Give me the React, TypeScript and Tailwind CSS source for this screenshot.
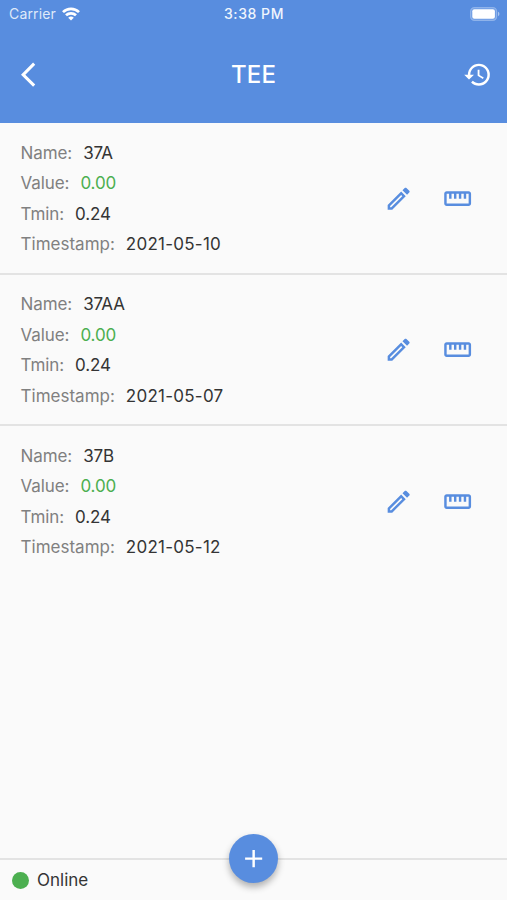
import React from 'react';

type Reading = { name: string; value: string; tmin: string; timestamp: string };

const readings: Reading[] = [
  { name: '37A', value: '0.00', tmin: '0.24', timestamp: '2021-05-10' },
  { name: '37AA', value: '0.00', tmin: '0.24', timestamp: '2021-05-07' },
  { name: '37B', value: '0.00', tmin: '0.24', timestamp: '2021-05-12' },
];

function Icon({ d, className = '' }: { d: string; className?: string }) {
  return (
    <svg viewBox="0 0 24 24" fill="currentColor" className={`block size-[29.3px] shrink-0 ${className}`}>
      <path d={d} />
    </svg>
  );
}

const backPath = 'M11.67 3.87 9.9 2.1 0 12l9.9 9.9 1.77-1.77L3.54 12z';
const historyPath =
  'M13 3a9 9 0 0 0-9 9H1l3.89 3.89.07.14L9 12H6c0-3.87 3.13-7 7-7s7 3.13 7 7-3.13 7-7 7c-1.93 0-3.68-.79-4.94-2.06l-1.42 1.42A8.954 8.954 0 0 0 13 21a9 9 0 0 0 0-18zm-1 5v5l4.28 2.54.72-1.21-3.5-2.08V8z';
const editPath =
  'm14.06 9.02.92.92L5.92 19H5v-.92zM17.66 3c-.25 0-.51.1-.7.29l-1.83 1.83 3.75 3.75 1.83-1.83a.996.996 0 0 0 0-1.41l-2.34-2.34c-.2-.2-.45-.29-.71-.29m-3.6 3.19L3 17.25V21h3.75L17.81 9.94z';
const rulerPath =
  'M21 6H3c-1.1 0-2 .9-2 2v8c0 1.1.9 2 2 2h18c1.1 0 2-.9 2-2V8c0-1.1-.9-2-2-2m0 10H3V8h2v4h2V8h2v4h2V8h2v4h2V8h2v4h2V8h2z';
const plusPath = 'M19 13h-6v6h-2v-6H5v-2h6V5h2v6h6z';

function StatusBar() {
  return (
    <div className="grid h-[27px] grid-cols-3 items-center pl-[9px] pr-[7px] text-white">
      <div className="flex items-center gap-[6px]">
        <span className="text-[14px] leading-none tracking-[0.16px] text-[#dfe9f9]">Carrier</span>
        <svg viewBox="0 0 18 14" className="h-[14px] w-[18px]" fill="none" stroke="currentColor" strokeWidth="2.7">
          <path d="M1 5.1a11.5 11.5 0 0 1 16 0" />
          <path d="M4 8.3a7.2 7.2 0 0 1 10 0" />
          <path d="M9 13.6 6.2 10.8a4 4 0 0 1 5.6 0z" fill="currentColor" stroke="none" />
        </svg>
      </div>
      <span className="pr-px pt-px text-center text-[14px] font-medium leading-none tracking-[0.55px] text-[#f0f5fd]">3:38 PM</span>
      <svg viewBox="0 0 30 14" className="h-[14px] w-[30px] justify-self-end">
        <rect x="0.6" y="0.6" width="26" height="12.8" rx="4" fill="#6f9de4" stroke="#8fb3ea" strokeWidth="1.2" />
        <rect x="2.3" y="2.3" width="22.6" height="9.4" rx="2" fill="white" />
        <path d="M28 4.8v4.4a2.4 2.4 0 0 0 0-4.4z" fill="#a9c5ef" />
      </svg>
    </div>
  );
}

function Field({
  label,
  value,
  labelClass = 'tracking-[-0.1px]',
  valueClass = 'text-[#343434] tracking-[-0.1px]',
}: {
  label: string;
  value: string;
  labelClass?: string;
  valueClass?: string;
}) {
  return (
    <div className="flex h-[30.5px] items-center gap-[11px]">
      <span className={`text-[#808080] ${labelClass}`}>{label}:</span>
      <span className={valueClass}>{value}</span>
    </div>
  );
}

function ReadingRow({ reading }: { reading: Reading }) {
  return (
    <li className="flex h-[151.5px] items-center justify-between border-b-2 border-[#e3e3e3] pl-[20.6px] pr-[34.9px] text-[17px] leading-none last:border-transparent">
      <div className="pt-[2px]">
        <Field label="Name" value={reading.name} />
        <Field label="Value" value={reading.value} valueClass="text-[#4caf50] tracking-[-0.1px]" />
        <Field label="Tmin" value={reading.tmin} />
        <Field
          label="Timestamp"
          value={reading.timestamp}
          labelClass="tracking-normal"
          valueClass="text-[#343434] tracking-[0.25px]"
        />
      </div>
      <div className="flex gap-[29.3px] pt-px text-[#588ddf]">
        <Icon d={editPath} />
        <Icon d={rulerPath} />
      </div>
    </li>
  );
}

export default function App() {
  return (
    <div className="relative flex h-[900px] w-[507px] flex-col overflow-hidden bg-[#fafafa] font-['Inter',sans-serif]">
      <header className="h-[123px] shrink-0 bg-[#588ddf] text-white">
        <StatusBar />
        <div className="grid h-[95px] grid-cols-[1fr_auto_1fr] items-center pl-[20.5px] pr-[14.3px]">
          <Icon d={backPath} />
          <h1 className="pr-[6px] text-[24px] font-medium leading-none tracking-[0.2px]">TEE</h1>
          <Icon d={historyPath} className="justify-self-end" />
        </div>
      </header>
      <ul className="grow">
        {readings.map((reading) => (
          <ReadingRow key={reading.name} reading={reading} />
        ))}
      </ul>
      <footer className="flex h-[42px] shrink-0 items-center gap-[8px] border-t-2 border-[#e3e3e3] pl-[12px]">
        <span className="size-[17px] rounded-full bg-[#4caf50]" />
        <span className="text-[17px] leading-none text-[#343434]">Online</span>
      </footer>
      <button className="absolute bottom-[17px] left-[229px] flex size-[49px] items-center justify-center rounded-full bg-[#588ddf] text-white shadow-[0_4px_7px_rgba(0,0,0,0.3)]">
        <Icon d={plusPath} />
      </button>
    </div>
  );
}
